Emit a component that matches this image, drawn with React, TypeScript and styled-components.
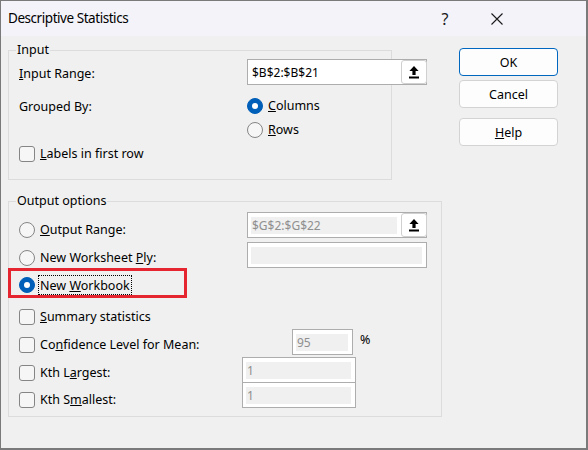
import React from 'react'
import styled, { createGlobalStyle } from 'styled-components'

const GlobalStyle = createGlobalStyle`
  html, body {
    margin: 0;
    padding: 0;
    background: #f0f0f0;
  }
  * {
    box-sizing: border-box;
  }
`

const FONT = `'Noto Sans', 'Open Sans', sans-serif`

const Window = styled.div`
  width: 588px;
  height: 450px;
  display: flex;
  flex-direction: column;
  background: #f0f0f0;
  border: 1px solid #7a7a7a;
  border-right-width: 2px;
  border-bottom-width: 2px;
  font-family: ${FONT};
  font-size: 12.5px;
  color: #000;
  overflow: hidden;
`

const TitleBar = styled.div`
  height: 35px;
  flex: none;
  display: flex;
  align-items: center;
  background: #f3f3f9;
  padding-left: 7px;
`

const Title = styled.div`
  flex: 1;
  font-size: 13.5px;
  letter-spacing: -0.45px;
  padding-bottom: 1px;
`

const TitleButton = styled.div<{ $w: number }>`
  width: ${(p) => p.$w}px;
  height: 35px;
  display: flex;
  align-items: center;
  justify-content: center;
  font-size: 16px;
  color: #1a1a1a;
`

const Body = styled.div`
  display: flex;
  padding: 12px 0 0 7px;
`

const LeftColumn = styled.div`
  width: 434px;
  padding-top: 2px;
  display: flex;
  flex-direction: column;
`

const RightColumn = styled.div`
  width: 99px;
  margin-left: 17px;
  display: flex;
  flex-direction: column;
`

const Group = styled.div<{ $w: number; $mt?: number; $pt: number; $pb: number }>`
  position: relative;
  width: ${(p) => p.$w}px;
  margin-top: ${(p) => p.$mt ?? 0}px;
  border: 1px solid #dcdcdc;
  padding: ${(p) => p.$pt}px 0 ${(p) => p.$pb}px 10px;
  display: flex;
  flex-direction: column;
`

const Caption = styled.span`
  position: absolute;
  top: -9px;
  left: 7px;
  padding: 0 1px;
  line-height: 16px;
  background: #f0f0f0;
`

const Row = styled.div<{ $h: number; $mt?: number }>`
  height: ${(p) => p.$h}px;
  margin-top: ${(p) => p.$mt ?? 0}px;
  display: flex;
  align-items: center;
  position: relative;
`

const Label = styled.div<{ $w: number }>`
  width: ${(p) => p.$w}px;
  flex: none;
  display: flex;
  align-items: center;
  white-space: nowrap;
`

const Field = styled.div<{ $w: number; $dy: number }>`
  width: ${(p) => p.$w}px;
  height: 26px;
  flex: none;
  align-self: flex-start;
  margin-top: ${(p) => p.$dy}px;
  display: flex;
  align-items: center;
  background: #fff;
  border: 1px solid #adadad;
  padding: 0 0 0 3px;
  position: relative;
  font-size: 12px;
`

const Value = styled.div<{ $disabled?: boolean }>`
  flex: 1;
  height: 17px;
  margin-right: 4px;
  padding-left: 1px;
  line-height: 17px;
  background: ${(p) => (p.$disabled ? '#f0f0f0' : 'transparent')};
  color: ${(p) => (p.$disabled ? '#8f8f8f' : '#000')};
  white-space: nowrap;
  overflow: hidden;
`

const PickButton = styled.div`
  width: 26px;
  height: 24px;
  flex: none;
  display: flex;
  align-items: center;
  justify-content: center;
  background: #fff;
  border: 1px solid #d0d0d0;
  border-radius: 3px;
  margin-right: -1px;
`

const RadioCircle = styled.span<{ $checked?: boolean }>`
  width: 16px;
  height: 16px;
  flex: none;
  border-radius: 50%;
  display: inline-flex;
  align-items: center;
  justify-content: center;
  background: ${(p) => (p.$checked ? '#005fb8' : '#f6f6f6')};
  border: 1px solid ${(p) => (p.$checked ? '#005fb8' : '#858585')};

  &::after {
    content: '';
    display: ${(p) => (p.$checked ? 'block' : 'none')};
    width: 6px;
    height: 6px;
    border-radius: 50%;
    background: #fff;
  }
`

const CheckBox = styled.span`
  width: 16px;
  height: 16px;
  flex: none;
  border-radius: 3px;
  background: #f6f6f6;
  border: 1px solid #858585;
`

const OptionText = styled.span<{ $focused?: boolean }>`
  margin-left: ${(p) => (p.$focused ? 3 : 5)}px;
  padding: ${(p) => (p.$focused ? '0 1px' : '0')};
  height: 20px;
  line-height: 19px;
  border: ${(p) => (p.$focused ? '1px dotted #000' : 'none')};
`

const Highlight = styled.div`
  position: absolute;
  left: -11px;
  top: -3px;
  width: 179px;
  height: 30px;
  border: 3px solid #e52630;
  pointer-events: none;
`

const Percent = styled.span`
  margin-left: 7px;
  align-self: flex-start;
  margin-top: 1px;
`

const DialogButton = styled.div<{ $primary?: boolean; $mt: number }>`
  height: 28px;
  margin-top: ${(p) => p.$mt}px;
  display: flex;
  align-items: center;
  justify-content: center;
  background: #fdfdfd;
  border: 1px solid ${(p) => (p.$primary ? '#0067c0' : '#d3d3d3')};
  border-radius: 4px;
  font-size: 12.5px;
`

const UploadIcon = () => (
  <svg width="10" height="13" viewBox="0 0 10 13">
    <path d="M5 0 L9.6 5 H6.6 V9 H3.4 V5 H0.4 Z" fill="#000" />
    <rect x="0" y="10.5" width="10" height="2" fill="#000" />
  </svg>
)

const CloseIcon = () => (
  <svg width="12" height="12" viewBox="0 0 12 12">
    <path d="M0.5 0.5 L11.5 11.5 M11.5 0.5 L0.5 11.5" stroke="#1a1a1a" strokeWidth="1.1" />
  </svg>
)

const Radio = ({ checked, focused, children }: { checked?: boolean; focused?: boolean; children: React.ReactNode }) => (
  <>
    <RadioCircle $checked={checked} />
    <OptionText $focused={focused}>{children}</OptionText>
  </>
)

const Check = ({ children }: { children: React.ReactNode }) => (
  <>
    <CheckBox />
    <OptionText>{children}</OptionText>
  </>
)

export default function App() {
  return (
    <>
      <GlobalStyle />
      <Window>
        <TitleBar>
          <Title>Descriptive Statistics</Title>
          <TitleButton $w={46}>?</TitleButton>
          <TitleButton $w={58}>
            <CloseIcon />
          </TitleButton>
          <TitleButton $w={60} />
        </TitleBar>
        <Body>
          <LeftColumn>
            <Group $w={384} $pt={9} $pb={15}>
              <Caption>Input</Caption>
              <Row $h={26}>
                <Label $w={228}>
                  <span>
                    <u>I</u>nput Range:
                  </span>
                </Label>
                <Field $w={180} $dy={-1}>
                  <Value>$B$2:$B$21</Value>
                  <PickButton>
                    <UploadIcon />
                  </PickButton>
                </Field>
              </Row>
              <Row $h={20} $mt={10}>
                <Label $w={228}>Grouped By:</Label>
                <Radio checked>
                  <u>C</u>olumns
                </Radio>
              </Row>
              <Row $h={20} $mt={4}>
                <Label $w={228} />
                <Radio>
                  <u>R</u>ows
                </Radio>
              </Row>
              <Row $h={20} $mt={4}>
                <Check>
                  <u>L</u>abels in first row
                </Check>
              </Row>
            </Group>

            <Group $w={434} $mt={21} $pt={14} $pb={2}>
              <Caption>Output options</Caption>
              <Row $h={28}>
                <Label $w={228}>
                  <Radio>
                    <u>O</u>utput Range:
                  </Radio>
                </Label>
                <Field $w={180} $dy={-4}>
                  <Value $disabled>$G$2:$G$22</Value>
                  <PickButton>
                    <UploadIcon />
                  </PickButton>
                </Field>
              </Row>
              <Row $h={27}>
                <Label $w={228}>
                  <Radio>
                    New Worksheet <u>P</u>ly:
                  </Radio>
                </Label>
                <Field $w={180} $dy={-2}>
                  <Value $disabled />
                </Field>
              </Row>
              <Row $h={28}>
                <Radio checked focused>
                  New <u>W</u>orkbook
                </Radio>
                <Highlight />
              </Row>
              <Row $h={27} $mt={4}>
                <Check>
                  <u>S</u>ummary statistics
                </Check>
              </Row>
              <Row $h={29}>
                <Label $w={273}>
                  <Check>
                    Co<u>n</u>fidence Level for Mean:
                  </Check>
                </Label>
                <Field $w={61} $dy={-1}>
                  <Value $disabled>95</Value>
                </Field>
                <Percent>%</Percent>
              </Row>
              <Row $h={27}>
                <Label $w={223}>
                  <Check>
                    Kth L<u>a</u>rgest:
                  </Check>
                </Label>
                <Field $w={114} $dy={-2}>
                  <Value $disabled>1</Value>
                </Field>
              </Row>
              <Row $h={28}>
                <Label $w={223}>
                  <Check>
                    Kth S<u>m</u>allest:
                  </Check>
                </Label>
                <Field $w={114} $dy={-4}>
                  <Value $disabled>1</Value>
                </Field>
              </Row>
            </Group>
          </LeftColumn>

          <RightColumn>
            <DialogButton $primary $mt={0}>
              OK
            </DialogButton>
            <DialogButton $mt={4}>Cancel</DialogButton>
            <DialogButton $mt={10}>
              <span>
                <u>H</u>elp
              </span>
            </DialogButton>
          </RightColumn>
        </Body>
      </Window>
    </>
  )
}
